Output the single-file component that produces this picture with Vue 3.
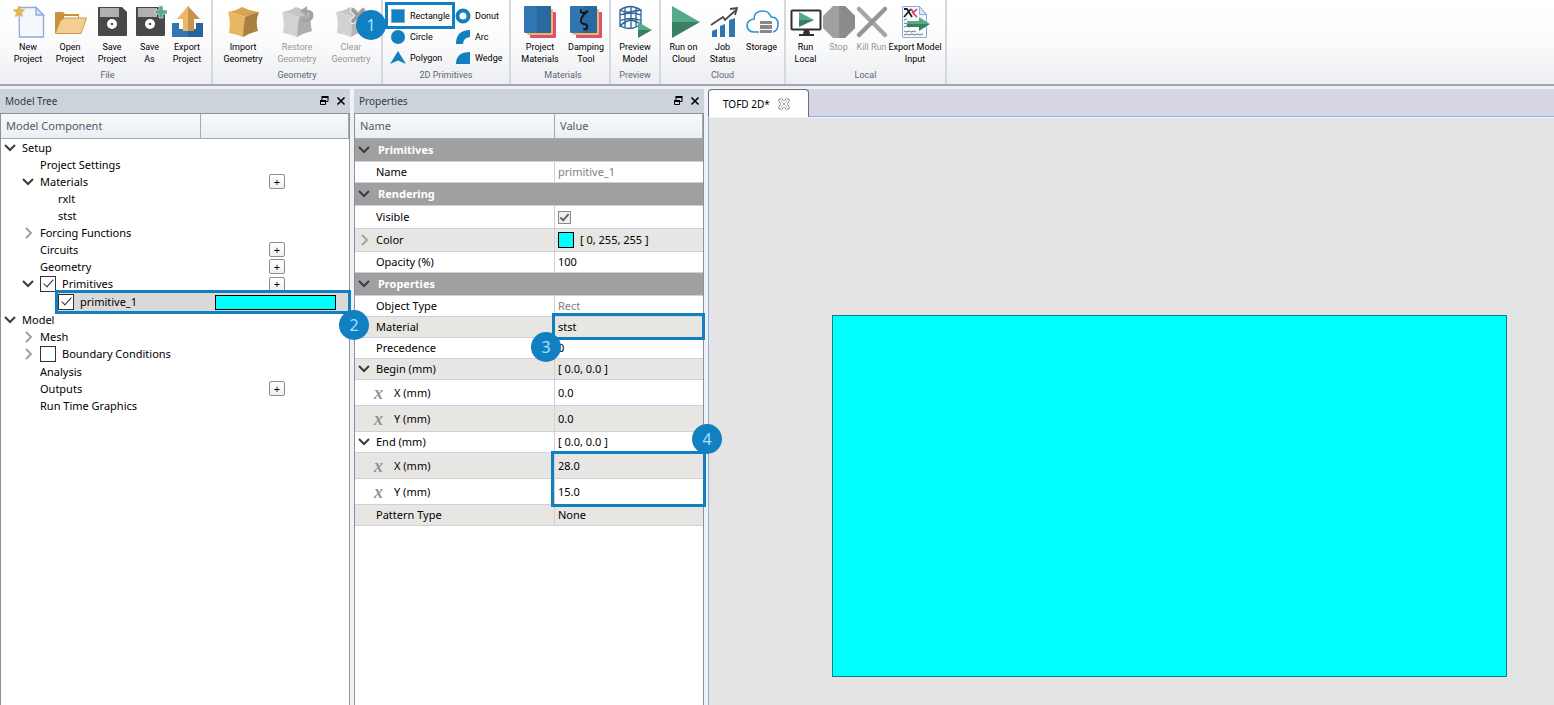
<!-- App.vue - Simulation workbench: ribbon, model tree, properties and canvas -->
<template>
  <div class="app">
    <header class="ribbon">
      <section v-for="group in ribbonGroups" :key="group.label" class="group" :class="group.spacing">
        <div v-if="group.tools" class="tools">
          <button
            v-for="tool in group.tools"
            :key="tool.icon"
            class="tool"
            :class="tool.size"
            :disabled="tool.disabled"
          >
            <svg class="tool-icon" viewBox="0 0 32 32" aria-hidden="true" v-html="icons[tool.icon]"></svg>
            <span v-for="line in tool.lines" :key="line" class="tool-line">{{ line }}</span>
          </button>
        </div>
        <div v-else class="primitives">
          <button
            v-for="shape in group.shapes"
            :key="shape.label"
            class="primitive"
            :class="{ marked: shape.step }"
          >
            <svg class="primitive-icon" viewBox="0 0 16 16" aria-hidden="true" v-html="icons[shape.icon]"></svg>
            <span>{{ shape.label }}</span>
            <span v-if="shape.step" class="step step-ribbon">{{ shape.step }}</span>
          </button>
        </div>
        <div class="group-label">{{ group.label }}</div>
      </section>
    </header>

    <main class="workspace">
      <section class="dock">
        <div class="dock-title">
          <h2>Model Tree</h2>
          <button class="dock-btn" aria-label="Float Model Tree">
            <svg viewBox="0 0 10 10" v-html="icons.float"></svg>
          </button>
          <button class="dock-btn" aria-label="Close Model Tree">
            <svg viewBox="0 0 10 10" v-html="icons.close"></svg>
          </button>
        </div>
        <div class="dock-body">
          <div class="tree-head">
            <span>Model Component</span>
            <span></span>
          </div>
          <div
            v-for="node in treeNodes"
            :key="node.label"
            class="tree-row"
            :class="{ checkable: node.checked !== undefined, selected: node.selected }"
          >
            <div class="tree-name" :class="`depth-${node.depth}`">
              <button v-if="node.toggle" class="toggle" :aria-label="`Toggle ${node.label}`">
                <svg viewBox="0 0 12 12" v-html="icons[node.toggle]"></svg>
              </button>
              <span v-else class="toggle"></span>
              <label v-if="node.checked !== undefined" class="tree-label">
                <input v-model="node.checked" type="checkbox" class="tree-check" />
                {{ node.label }}
              </label>
              <span v-else class="tree-label">{{ node.label }}</span>
            </div>
            <div class="tree-cell">
              <button v-if="node.add" class="add-btn" :aria-label="`Add to ${node.label}`">+</button>
              <span v-if="node.selected" class="tree-color"></span>
            </div>
            <span v-if="node.selected" class="step step-tree">2</span>
          </div>
        </div>
      </section>

      <section class="dock">
        <div class="dock-title">
          <h2>Properties</h2>
          <button class="dock-btn" aria-label="Float Properties">
            <svg viewBox="0 0 10 10" v-html="icons.float"></svg>
          </button>
          <button class="dock-btn" aria-label="Close Properties">
            <svg viewBox="0 0 10 10" v-html="icons.close"></svg>
          </button>
        </div>
        <div class="dock-body">
          <table class="props">
            <thead>
              <tr>
                <th class="name-col">Name</th>
                <th>Value</th>
              </tr>
            </thead>
            <tbody>
              <tr v-for="(row, i) in propertyRows" :key="i" :class="[row.kind, { alt: row.alt }]">
                <th v-if="row.kind === 'section'" colspan="2">
                  <div class="prop-name">
                    <button class="toggle" :aria-label="`Toggle ${row.name}`">
                      <svg viewBox="0 0 12 12" v-html="icons.down"></svg>
                    </button>
                    <span>{{ row.name }}</span>
                  </div>
                </th>
                <template v-else>
                  <td class="name">
                    <div class="prop-name">
                      <button v-if="row.toggle" class="toggle" :aria-label="`Toggle ${row.name}`">
                        <svg viewBox="0 0 12 12" v-html="icons[row.toggle]"></svg>
                      </button>
                      <span v-else-if="row.kind === 'axis'" class="var-mark">x</span>
                      <span v-else class="toggle"></span>
                      <label v-if="row.check" for="visible">{{ row.name }}</label>
                      <span v-else>{{ row.name }}</span>
                    </div>
                  </td>
                  <td class="value" :class="[row.mark, { muted: row.muted }]">
                    <input v-if="row.check" id="visible" type="checkbox" class="prop-check" checked />
                    <div v-else class="value-inner">
                      <span v-if="row.swatch" class="swatch"></span>
                      <span>{{ row.value }}</span>
                    </div>
                    <span v-if="row.step" class="step" :class="`step-${row.mark}`">{{ row.step }}</span>
                  </td>
                </template>
              </tr>
            </tbody>
          </table>
        </div>
      </section>

      <section class="viewer">
        <div class="tabs">
          <div class="tab">
            <span>TOFD 2D*</span>
            <button class="tab-close" aria-label="Close tab">
              <svg viewBox="0 0 12 12">
                <path d="M1 1h3l2 2 2-2h3v3L9 6l2 2v3H8L6 9l-2 2H1V8l2-2-2-2z" fill="#fff" stroke="#8c8c8c" />
                <path d="M3 3l6 6M9 3l-6 6" stroke="#a8a8a8" />
              </svg>
            </button>
          </div>
        </div>
        <div class="canvas">
          <div class="rect-shape"></div>
        </div>
      </section>
    </main>
  </div>
</template>

<script setup>
import { ref } from 'vue';

const cube = (left, right, top) => `
  <path d="M1 6Q9 5 15 1Q23 5 32 6Q24 8 18 11Q9 7 1 6z" fill="${top}"/>
  <path d="M1 6Q10 7 18 11Q16 21 16 31Q9 28 2 27Q4 16 1 6z" fill="${left}"/>
  <path d="M32 6Q24 8 18 11Q16 21 16 31Q23 27 31 25Q28 15 32 6z" fill="${right}"/>`;

const disk = `
  <path d="M2 1h24l5 5v23q0 1-1 1H3q-1 0-1-1z" fill="#484848"/>
  <path d="M4 2h19v9H4z" fill="#b0b0b0"/>
  <circle cx="16" cy="18" r="5" fill="#fff"/><circle cx="16" cy="18" r="1.3" fill="#555"/>`;

const sheets = `
  <rect x="6" y="6" width="26" height="26" rx="1" fill="#d9536f"/>
  <rect x="3" y="3" width="26" height="26" rx="1" fill="#ecb866"/>
  <rect width="27" height="27" rx="1" fill="#3276b1"/>
  <path d="M13 0h13q1 0 1 1v25q0 1-1 1H13z" fill="#2a68a0"/>`;

const icons = {
  newProject: `
    <path d="M7 1.500h17l7.500 7.500v22H7.500z" fill="#f4f7fc" stroke="#8eaadb" stroke-width="1.300"/>
    <path d="M24 1.500V9h7.500z" fill="#dce6f5" stroke="#8eaadb" stroke-width="1.300"/>
    <path d="M7 0l1.500 3.500 4 .4-3 2.700.9 3.900L7 8.500l-3.400 2 .9-3.900-3-2.700 4-.4z" fill="#e8b258" stroke="#e8b258"/>`,
  openProject: `
    <path d="M1 7q0-1 1-1h7l2 2h14v19H1z" fill="#c8923c"/>
    <path d="M10 10h14v4H10z" fill="#fff"/>
    <path d="M9.500 12H32.500L27 27.500H1.500L6.500 14h2z" fill="#f3cf94" stroke="#d09b48"/>`,
  save: disk,
  saveAs: `${disk}<path d="M25 0h4v4h4v4h-4v4h-4V8h-4V4h4z" fill="#55ab87" stroke="#f2f2f2" stroke-width=".6"/>`,
  exportProject: `
    <path d="M1 17h7v6h17v-6h7v14H1z" fill="#3276b1"/><path d="M17 23h8v-6h7v14H17z" fill="#28659d"/>
    <path d="M17 0L6 13h6v12h5z" fill="#ebb965"/><path d="M17 0l12 13h-6v12h-6z" fill="#c49450"/>`,
  importGeometry: cube('#e9b663', '#a9803f', '#d9a450'),
  restoreGeometry: `${cube('#d2d2d2', '#aeaeae', '#c5c5c5')}
    <path d="M20 14q10 2 11-4 0-5-6-5" fill="none" stroke="#a2a2a2" stroke-width="3"/>
    <path d="M19 5l7-5v10z" fill="#a2a2a2"/>`,
  clearGeometry: `${cube('#d2d2d2', '#b6b6b6', '#c5c5c5')}
    <path d="M18 4l10 11M28 4L18 15" stroke="#f0f0f0" stroke-width="6" stroke-linecap="round"/>
    <path d="M18 4l10 11M28 4L18 15" stroke="#9b9b9b" stroke-width="4" stroke-linecap="round"/>`,
  materials: sheets,
  damping: `${sheets}
    <path d="M11 4q-1 3 2 3 3 0 5-2-7 5-7 10 0 3 4 3 3 1 2 4-1 2-3 1" fill="none" stroke="#111" stroke-width="1.800" stroke-linecap="round"/>`,
  preview: `
    <path d="M1 4Q11-3 22 4v14q-10 6-21 2z" fill="#f2f7fb"/>
    <path d="M1 4Q11-3 22 4v14q-5-3-10-4-6 1-11 6zM6 2v19M12 0v22M17 2v18M1 9q11-4 21 0M1 14.500q11-4 21 0" fill="none" stroke="#2f6294" stroke-width="1.300"/>
    <path d="M1 4q5 3 10 2t11-2M1 20q10 5 18 0" fill="none" stroke="#2f6294" stroke-width="1.300"/>
    <path d="M19 16l14 8H19z" fill="#55ab87"/><path d="M19 24h14l-14 8z" fill="#3a7f62"/>`,
  runCloud: '<path d="M4 0l28 16H4z" fill="#55ab87"/><path d="M4 16h28L4 32z" fill="#3a7f62"/>',
  jobStatus: `
    <path d="M5 25l5-2v8H5zM13 20l5-2v13h-5zM22 14l6-2v19h-6z" fill="#3276b1"/>
    <path d="M4 19l12-8 2 3L29 4" fill="none" stroke="#484848" stroke-width="1.800"/>
    <path d="M23 3l7-1-2 7" fill="none" stroke="#484848" stroke-width="1.800"/>`,
  storage: `
    <path d="M13 26H8q-6 0-7-6 0-6 7-7 0-8 9-8 6 0 8 6 7 0 7 7 0 7-5 8" fill="none" stroke="#2e94d4" stroke-width="1.600"/>
    <path d="M14 15h12v3H14zM14 19h12v4H14zM14 24h12v3H14z" fill="#87878c"/>`,
  runLocal: `
    <rect x="1.500" y="4.500" width="29" height="19" rx="1" fill="#fff" stroke="#303030" stroke-width="2"/>
    <path d="M14 24h5l1 4h4v2H9v-2h4z" fill="#303030"/>
    <path d="M9 6l15 8H9z" fill="#55ab87"/><path d="M9 14h15L9 21z" fill="#3a7f62"/>`,
  stop: `
    <path d="M10 0h12l10 10v12L22 32H10L0 22V10z" fill="#a0a0a0"/>
    <path d="M16 0h6l10 10v12L22 32h-6z" fill="#8b8b8b"/>`,
  kill: `
    <path d="M3 3l26 26" stroke="#a6a6a6" stroke-width="4.500" stroke-linecap="round"/>
    <path d="M29 3L3 29" stroke="#959595" stroke-width="4.500" stroke-linecap="round"/>`,
  exportModel: `
    <path d="M3.500.5h17l7 8v23h-24z" fill="#f7f9fd" stroke="#8eaadb"/>
    <path d="M20.500.5v8h7z" fill="#dce6f5" stroke="#8eaadb"/>
    <path d="M5 3h3l5 8M12 3l-7 8" fill="none" stroke="#222" stroke-width="1.800"/>
    <path d="M18 3l-4 4 4 4M12 3l3 4" fill="none" stroke="#e0315f" stroke-width="1.600"/>
    <path d="M5 14l3-1M5 17l3 1M5 21l3-1 2 1 3-1M5 25l2 1 3-1 2 1 3-1 2 1M5 29l3-1 2 1 3-1 3 1 3-1 2 1 3-1" fill="none" stroke="#777"/>
    <path d="M8 15h12v-4l11 7H8z" fill="#55ab87"/><path d="M8 18h23l-11 7v-4H8z" fill="#3a7f62"/>`,
  rectangle: '<rect x="1.500" y="1.500" width="13" height="13" fill="#127fc1" stroke="#7fa6c2"/>',
  circle: '<circle cx="8" cy="8" r="7" fill="#127fc1"/>',
  polygon: '<path d="M8 1l8 13-8-3.500L0 14z" fill="#127fc1"/>',
  donut: '<circle cx="8" cy="8" r="5.500" fill="#fff" stroke="#127fc1" stroke-width="4"/>',
  arc: '<path d="M1 15Q1 1 15 1v7Q8 9 8 15z" fill="#127fc1"/>',
  wedge: '<path d="M1 14Q1 2 15 2v12z" fill="#127fc1"/>',
  down: '<path d="M1 3l5 5 5-5" fill="none" stroke="#3c3c3c" stroke-width="2"/>',
  right: '<path d="M4 1l5 5-5 5" fill="none" stroke="#a0a0a0" stroke-width="2"/>',
  float: `
    <path d="M3 4V1.500h6v4H7" fill="none" stroke="#000"/><path d="M2.500 1h7" stroke="#000" stroke-width="2"/>
    <path d="M1.500 5h5v3.500h-5z" fill="none" stroke="#000"/><path d="M1 5h6" stroke="#000" stroke-width="2"/>`,
  close: '<path d="M1.500 1.500l7 7M8.500 1.500l-7 7" stroke="#000" stroke-width="1.600"/>'
};

const ribbonGroups = [
  {
    label: 'File',
    spacing: 'first',
    tools: [
      { icon: 'newProject', lines: ['New', 'Project'] },
      { icon: 'openProject', lines: ['Open', 'Project'] },
      { icon: 'save', lines: ['Save', 'Project'] },
      { icon: 'saveAs', lines: ['Save', 'As'], size: 'narrow' },
      { icon: 'exportProject', lines: ['Export', 'Project'] }
    ]
  },
  {
    label: 'Geometry',
    tools: [
      { icon: 'importGeometry', lines: ['Import', 'Geometry'], size: 'wide' },
      { icon: 'restoreGeometry', lines: ['Restore', 'Geometry'], size: 'wide', disabled: true },
      { icon: 'clearGeometry', lines: ['Clear', 'Geometry'], size: 'wide', disabled: true }
    ]
  },
  {
    label: '2D Primitives',
    shapes: [
      { icon: 'rectangle', label: 'Rectangle', step: 1 },
      { icon: 'donut', label: 'Donut' },
      { icon: 'circle', label: 'Circle' },
      { icon: 'arc', label: 'Arc' },
      { icon: 'polygon', label: 'Polygon' },
      { icon: 'wedge', label: 'Wedge' }
    ]
  },
  {
    label: 'Materials',
    spacing: 'leading',
    tools: [
      { icon: 'materials', lines: ['Project', 'Materials'], size: 'medium' },
      { icon: 'damping', lines: ['Damping', 'Tool'], size: 'medium' }
    ]
  },
  { label: 'Preview', tools: [{ icon: 'preview', lines: ['Preview', 'Model'] }] },
  {
    label: 'Cloud',
    tools: [
      { icon: 'runCloud', lines: ['Run on', 'Cloud'], size: 'compact' },
      { icon: 'jobStatus', lines: ['Job', 'Status'], size: 'compact' },
      { icon: 'storage', lines: ['Storage'], size: 'compact' }
    ]
  },
  {
    label: 'Local',
    tools: [
      { icon: 'runLocal', lines: ['Run', 'Local'], size: 'narrow' },
      { icon: 'stop', lines: ['Stop'], size: 'narrow', disabled: true },
      { icon: 'kill', lines: ['Kill Run'], size: 'narrow', disabled: true },
      { icon: 'exportModel', lines: ['Export Model', 'Input'], size: 'wide' }
    ]
  }
];

const treeNodes = ref([
  { label: 'Setup', depth: 0, toggle: 'down' },
  { label: 'Project Settings', depth: 1 },
  { label: 'Materials', depth: 1, toggle: 'down', add: true },
  { label: 'rxlt', depth: 2 },
  { label: 'stst', depth: 2 },
  { label: 'Forcing Functions', depth: 1, toggle: 'right' },
  { label: 'Circuits', depth: 1, add: true },
  { label: 'Geometry', depth: 1, add: true },
  { label: 'Primitives', depth: 1, toggle: 'down', checked: true, add: true },
  { label: 'primitive_1', depth: 2, checked: true, selected: true },
  { label: 'Model', depth: 0, toggle: 'down' },
  { label: 'Mesh', depth: 1, toggle: 'right' },
  { label: 'Boundary Conditions', depth: 1, toggle: 'right', checked: false },
  { label: 'Analysis', depth: 1 },
  { label: 'Outputs', depth: 1, add: true },
  { label: 'Run Time Graphics', depth: 1 }
]);

const propertyRows = [
  { kind: 'section', name: 'Primitives' },
  { name: 'Name', value: 'primitive_1', muted: true },
  { kind: 'section', name: 'Rendering' },
  { kind: 'roomy', name: 'Visible', check: true },
  { kind: 'roomy', name: 'Color', value: '[ 0, 255, 255 ]', toggle: 'right', swatch: true, alt: true },
  { name: 'Opacity (%)', value: '100' },
  { kind: 'section', name: 'Properties' },
  { name: 'Object Type', value: 'Rect', muted: true },
  { name: 'Material', value: 'stst', alt: true, mark: 'material', step: 3 },
  { name: 'Precedence', value: '0' },
  { name: 'Begin (mm)', value: '[ 0.0, 0.0 ]', toggle: 'down', alt: true },
  { kind: 'axis', name: 'X (mm)', value: '0.0' },
  { kind: 'axis', name: 'Y (mm)', value: '0.0', alt: true },
  { name: 'End (mm)', value: '[ 0.0, 0.0 ]', toggle: 'down' },
  { kind: 'axis', name: 'X (mm)', value: '28.0', alt: true, mark: 'end', step: 4 },
  { kind: 'axis', name: 'Y (mm)', value: '15.0' },
  { name: 'Pattern Type', value: 'None', alt: true }
];
</script>

<style>
body {
  margin: 0;
}
</style>

<style scoped>
.app {
  display: flex;
  flex-direction: column;
  min-height: 100vh;
  font-family: "Noto Sans", "Open Sans", sans-serif;
  font-size: 11px;
  color: #000;
  background: #eff2f6;
}

.app *,
.app *::before,
.app *::after {
  box-sizing: border-box;
}

button {
  font: inherit;
  color: inherit;
  background: none;
  border: none;
  padding: 0;
}

svg {
  display: block;
  overflow: visible;
}

/* Ribbon */
.ribbon {
  display: flex;
  background: linear-gradient(#fff, #fbfbfc 50%, #eceef1);
  border-bottom: 2px solid #a3a6b2;
  font-family: Roboto, "Noto Sans", sans-serif;
  font-size: 9px;
  line-height: 12px;
}

.group {
  display: flex;
  flex-direction: column;
  justify-content: space-between;
  padding: 6px 3px 2px;
  border-right: 2px solid #d5d8dd;
}

.group.first {
  padding-left: 7px;
}

.group.leading {
  padding-left: 6px;
  padding-right: 0;
}

.tools {
  display: flex;
}

.tool {
  display: flex;
  flex-direction: column;
  align-items: center;
  width: 42px;
  white-space: nowrap;
}

.tool.narrow {
  width: 33px;
}

.tool.compact {
  width: 39px;
}

.tool.medium {
  width: 46px;
}

.tool.wide {
  width: 54px;
}

.tool:disabled {
  color: #979797;
}

.tool-icon {
  width: 32px;
  height: 32px;
  margin-bottom: 3px;
}

.group-label {
  line-height: 14px;
  text-align: center;
  color: #5c6678;
}

.primitives {
  display: grid;
  grid-template-columns: 65px 51px;
  grid-auto-rows: 21px;
  margin: -1px 0 0 4px;
}

.primitive {
  position: relative;
  display: flex;
  align-items: center;
  gap: 4px;
}

.primitive-icon {
  width: 16px;
  height: 16px;
}

.primitive.marked::after {
  content: "";
  position: absolute;
  inset: -3px 0 -3px -5px;
  border: 3px solid #127fc1;
}

/* Numbered callouts */
.step {
  position: absolute;
  z-index: 5;
  width: 30px;
  height: 30px;
  border-radius: 50%;
  background: #127fc1;
  color: #a3e2ff;
  font-family: "Noto Sans", sans-serif;
  font-size: 16px;
  line-height: 30px;
  text-align: center;
}

.step-ribbon {
  top: 5px;
  left: -34px;
}

.step-tree {
  top: 17px;
  right: -20px;
}

.step-material {
  top: 15px;
  left: -24px;
}

.step-end {
  top: -29px;
  right: -19px;
}

/* Docks */
.workspace {
  flex: 1;
  display: grid;
  grid-template-columns: 350px 350px 1fr;
  column-gap: 4px;
  padding-top: 3px;
  background: #eff1f6;
}

.dock {
  display: flex;
  flex-direction: column;
}

.dock-title {
  display: flex;
  align-items: center;
  gap: 7px;
  height: 24px;
  padding: 0 4px 0 5px;
  background: #cdd3da;
}

.dock-title h2 {
  flex: 1;
  margin: 0;
  font-size: 10px;
  font-weight: 400;
  color: #333a44;
}

.dock-btn {
  width: 10px;
  height: 10px;
}

.dock-body {
  flex: 1;
  background: #fff;
  border: solid #8b909c;
  border-width: 1px 1px 0;
}

.tree-head {
  display: grid;
  grid-template-columns: 200px 1fr;
  line-height: 24px;
  color: #525a68;
  background: linear-gradient(#f7f8fa, #ebeff4);
  border-bottom: 1px solid #a3a9b8;
}

.tree-head span {
  padding-left: 5px;
  border-right: 1px solid #a3a9b8;
}

.tree-row {
  position: relative;
  display: grid;
  grid-template-columns: 200px 1fr;
  height: 17px;
}

.tree-row.checkable {
  height: 18px;
}

.tree-row.selected {
  background: linear-gradient(to right, #fff 56px, #d9d9d9 56px);
}

.tree-row.selected::after {
  content: "";
  position: absolute;
  z-index: 2;
  inset: -3px -2px -3px 54px;
  border: 3px solid #127fc1;
}

.tree-name {
  display: flex;
  align-items: center;
}

.depth-0 {
  padding-left: 3px;
}

.depth-1 {
  padding-left: 21px;
}

.depth-2 {
  padding-left: 39px;
}

.toggle {
  flex: none;
  width: 12px;
  height: 12px;
  margin-right: 6px;
}

.tree-label {
  display: flex;
  align-items: center;
  gap: 6px;
  line-height: 16px;
}

.tree-check {
  appearance: none;
  width: 16px;
  height: 16px;
  margin: 0;
  background: #fff;
  border: 1px solid #333;
}

.tree-check:checked::after,
.prop-check:checked::after {
  content: "";
  display: block;
  width: 5px;
  height: 10px;
  margin: 0 auto;
  border: solid #333;
  border-width: 0 1px 1px 0;
  transform: rotate(42deg);
}

.tree-cell {
  display: flex;
  align-items: center;
}

.add-btn {
  width: 16px;
  height: 15px;
  margin-left: 68px;
  border: 1px solid #8d8d8d;
  border-radius: 2px;
  background: linear-gradient(#fff, #f0f0f0);
  line-height: 12px;
}

.tree-color {
  flex: 1;
  height: 15px;
  margin: 0 13px 0 14px;
  background: #0ff;
  border: 1px solid #000;
}

/* Properties */
.props {
  width: 100%;
  table-layout: fixed;
  border-collapse: separate;
  border-spacing: 0;
}

.props th,
.props td {
  height: 21px;
  padding: 0;
  text-align: left;
  line-height: 16px;
  border-bottom: 1px solid #ced0dd;
}

.props thead th {
  height: 25px;
  padding-left: 5px;
  font-weight: 400;
  color: #525a68;
  background: linear-gradient(#f7f8fa, #ebeff4);
  border-right: 1px solid #a3a9b8;
  border-bottom-color: #a3a9b8;
}

.name-col {
  width: 200px;
}

.props .section th {
  height: 23px;
  color: #fff;
  background: #a0a0a0;
}

.section .toggle {
  margin-right: 8px;
}

.props .roomy td {
  height: 23px;
}

.props .axis td {
  height: 26px;
}

.alt td {
  background: #e8e6e3;
}

.props .name {
  border-right: 1px solid #ced0dd;
}

.prop-name {
  display: flex;
  align-items: center;
  padding-left: 3px;
}

.var-mark {
  width: 20px;
  margin-left: 16px;
  font-family: "Liberation Serif", serif;
  font-size: 18px;
  font-style: italic;
  font-weight: 700;
  line-height: 16px;
  color: #929292;
}

.props .value {
  position: relative;
  padding-left: 3px;
}

.value.muted {
  color: #808080;
}

.value-inner {
  display: flex;
  align-items: center;
  gap: 6px;
}

.swatch {
  width: 16px;
  height: 16px;
  background: #0ff;
  border: 1px solid #000;
}

.prop-check {
  display: block;
  appearance: none;
  width: 13px;
  height: 13px;
  margin: 0;
  background: #eee;
  border: 1px solid #8a8a8a;
}

.prop-check:checked::after {
  width: 5px;
  height: 9px;
  border-width: 0 2px 2px 0;
  border-color: #666;
}

.value.material::after,
.value.end::after {
  content: "";
  position: absolute;
  z-index: 2;
  inset: -4px -2px -3px -3px;
  border: 3px solid #127fc1;
}

/* The end marker spans both coordinate rows */
.value.end::after {
  inset: -2px -3px -29px -4px;
}

/* Viewer */
.viewer {
  display: flex;
  flex-direction: column;
}

.tabs {
  display: flex;
  height: 28px;
  background: #d7d6e4;
  border-bottom: 1px solid #8fb0e0;
}

.tab {
  display: flex;
  align-items: center;
  gap: 8px;
  height: 28px;
  padding: 0 18px 0 14px;
  font-size: 10px;
  background: #fff;
  border: 1px solid #68727e;
  border-bottom: none;
  border-radius: 4px 4px 0 0;
}

.tab-close {
  width: 12px;
  height: 12px;
}

.canvas {
  flex: 1;
  display: flex;
  align-items: flex-end;
  padding: 28px 47px 28px 123px;
  background: #e4e4e4;
  border-top: 1px solid #f2f4f8;
  border-left: 1px solid #8fb0e0;
}

.rect-shape {
  flex: 1;
  aspect-ratio: 28 / 15;
  background: #0ff;
  border: 1px solid #067f7f;
}
</style>
